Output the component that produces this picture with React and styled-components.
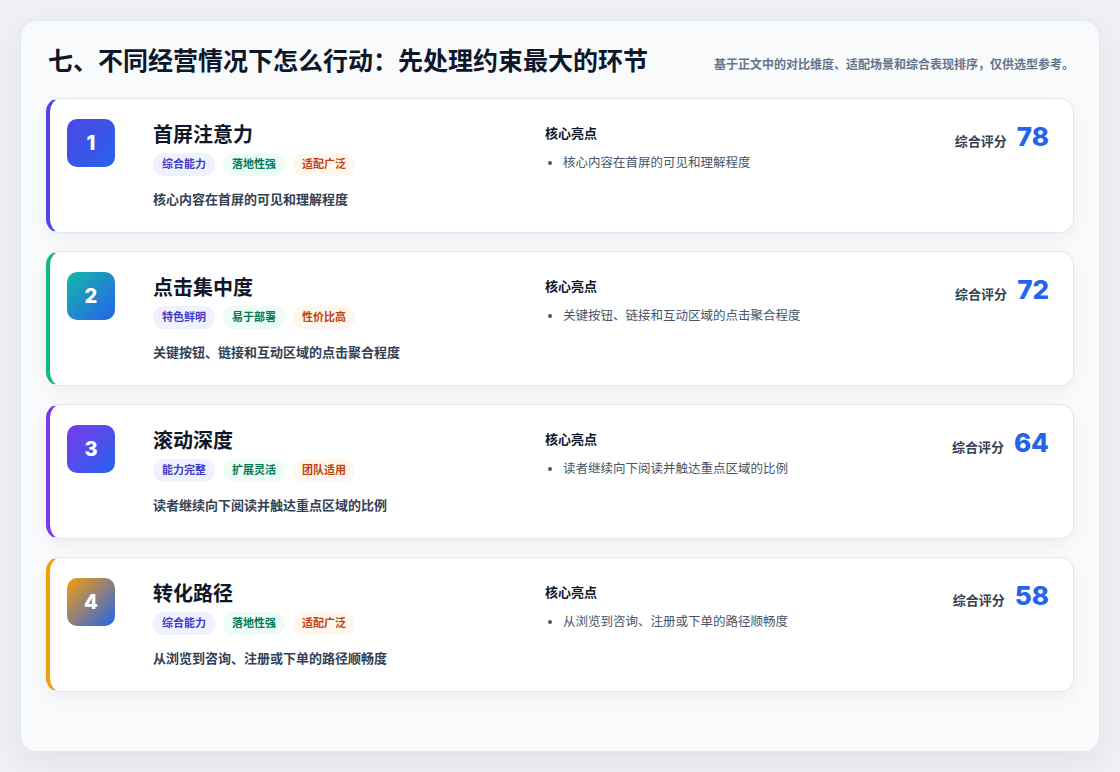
import React from "react";
import styled, { createGlobalStyle } from "styled-components";

const Global = createGlobalStyle`
  html, body { margin: 0; background: #eef0f3; }
  body { padding: 20px; font-family: Inter, "Noto Sans CJK SC", "Noto Sans", sans-serif; }
  * { box-sizing: border-box; }
`;

const Panel = styled.section`
  width: 1080px;
  height: 732px;
  background: #f8fafc;
  border: 1px solid #e2e8f0;
  border-radius: 16px;
  box-shadow: 0 10px 30px rgba(15, 23, 42, 0.06);
  padding: 24px 25px 26px 25px;
`;

const Header = styled.header`
  display: flex;
  justify-content: space-between;
  align-items: flex-end;
  padding: 0 0 21px 2px;
`;

const Title = styled.h2`
  margin: 0;
  width: 612px;
  font-size: 25px;
  line-height: 32px;
  font-weight: 700;
  color: #0f172a;
`;

const Sub = styled.p`
  margin: 0 0 2px;
  width: 360px;
  text-align: right;
  font-size: 12px;
  line-height: 21px;
  font-weight: 600;
  color: #64748b;
`;

const List = styled.div`
  display: flex;
  flex-direction: column;
  gap: 18px;
`;

const Card = styled.article`
  height: 135px;
  background: #fff;
  border: 1px solid #e2e8f0;
  border-left: 4px solid ${(p) => p.$accent};
  border-radius: 14px;
  box-shadow: 0 6px 18px rgba(15, 23, 42, 0.05);
  padding: 20px 24px 20px 17px;
  display: grid;
  grid-template-columns: 48px 354px 1fr auto;
  column-gap: 38px;
  align-items: start;
`;

const Badge = styled.div`
  width: 48px;
  height: 48px;
  border-radius: 10px;
  background: linear-gradient(135deg, ${(p) => p.$from}, ${(p) => p.$to});
  color: #fff;
  font-weight: 800;
  font-size: 20px;
  display: flex;
  align-items: center;
  justify-content: center;
`;

const Main = styled.div`
  display: flex;
  flex-direction: column;
`;

const Name = styled.h3`
  margin: 2px 0 0;
  font-size: 20px;
  line-height: 28px;
  font-weight: 700;
  color: #0f172a;
`;

const Tags = styled.div`
  display: flex;
  gap: 8px;
  margin-top: 4px;
`;

const Tag = styled.span`
  padding: 0 9px;
  height: 23px;
  line-height: 23px;
  border-radius: 12px;
  font-size: 11px;
  font-weight: 600;
  background: ${(p) => p.$bg};
  color: ${(p) => p.$fg};
`;

const Desc = styled.p`
  margin: 13px 0 0;
  font-size: 13px;
  font-weight: 600;
  color: #334155;
`;

const Highlights = styled.div`
  padding-top: 4px;
`;

const HTitle = styled.div`
  font-size: 13px;
  font-weight: 700;
  color: #0f172a;
`;

const Bullets = styled.ul`
  margin: 10px 0 0;
  padding-left: 18px;
  font-size: 12.5px;
  color: #475569;
  li::marker { color: #475569; }
`;

const Score = styled.div`
  display: flex;
  align-items: baseline;
  gap: 10px;
  padding-top: 2px;
`;

const ScoreLabel = styled.span`
  font-size: 13px;
  font-weight: 700;
  color: #334155;
`;

const ScoreValue = styled.span`
  font-size: 26px;
  font-weight: 800;
  color: #2563eb;
`;

const tagStyles = [
  { bg: "#eef2ff", fg: "#4338ca" },
  { bg: "#ecfdf5", fg: "#047857" },
  { bg: "#fff7ed", fg: "#c2410c" },
];

const items = [
  { n: 1, name: "首屏注意力", tags: ["综合能力", "落地性强", "适配广泛"], desc: "核心内容在首屏的可见和理解程度", score: 78, accent: "#4f46e5", from: "#4f46e5", to: "#2563eb" },
  { n: 2, name: "点击集中度", tags: ["特色鲜明", "易于部署", "性价比高"], desc: "关键按钮、链接和互动区域的点击聚合程度", score: 72, accent: "#10b981", from: "#14b8a6", to: "#2563eb" },
  { n: 3, name: "滚动深度", tags: ["能力完整", "扩展灵活", "团队适用"], desc: "读者继续向下阅读并触达重点区域的比例", score: 64, accent: "#7c3aed", from: "#7c3aed", to: "#2563eb" },
  { n: 4, name: "转化路径", tags: ["综合能力", "落地性强", "适配广泛"], desc: "从浏览到咨询、注册或下单的路径顺畅度", score: 58, accent: "#f59e0b", from: "#f59e0b", to: "#2563eb" },
];

export default function App() {
  return (
    <>
      <Global />
      <Panel>
        <Header>
          <Title>七、不同经营情况下怎么行动：先处理约束最大的环节</Title>
          <Sub>基于正文中的对比维度、适配场景和综合表现排序，仅供选型参考。</Sub>
        </Header>
        <List>
          {items.map((it) => (
            <Card key={it.n} $accent={it.accent}>
              <Badge $from={it.from} $to={it.to}>{it.n}</Badge>
              <Main>
                <Name>{it.name}</Name>
                <Tags>
                  {it.tags.map((t, i) => (
                    <Tag key={t} $bg={tagStyles[i].bg} $fg={tagStyles[i].fg}>{t}</Tag>
                  ))}
                </Tags>
                <Desc>{it.desc}</Desc>
              </Main>
              <Highlights>
                <HTitle>核心亮点</HTitle>
                <Bullets><li>{it.desc}</li></Bullets>
              </Highlights>
              <Score>
                <ScoreLabel>综合评分</ScoreLabel>
                <ScoreValue>{it.score}</ScoreValue>
              </Score>
            </Card>
          ))}
        </List>
      </Panel>
    </>
  );
}
